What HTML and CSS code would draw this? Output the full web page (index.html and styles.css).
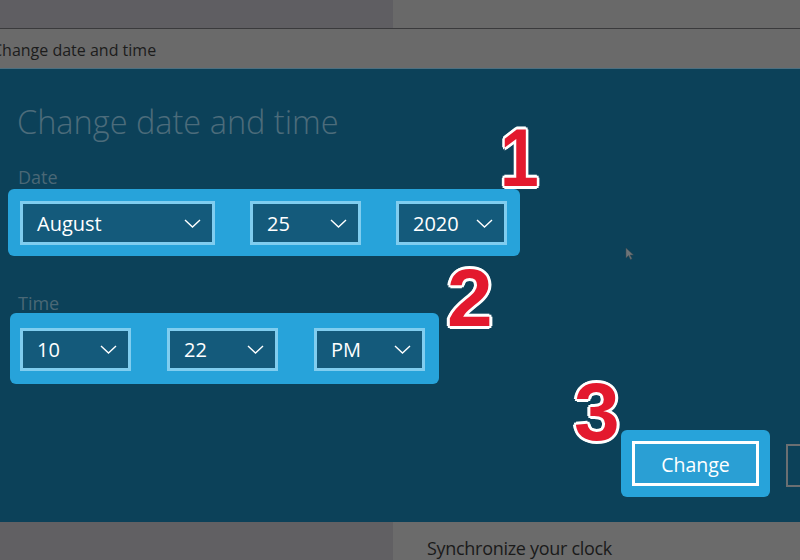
FILE: index.html
```html
<!DOCTYPE html>
<html>
<head>
<meta charset="utf-8">
<link rel="stylesheet" href="styles.css">
</head>
<body>
<div class="screen">
  <div class="topband"><div class="tb-left"></div><div class="tb-right"></div></div>
  <div class="titlebar"><span class="title">Change date and time</span></div>
  <div class="panel">
    <h1 class="heading">Change date and time</h1>
    <div class="label">Date</div>
    <div class="hl hl-date">
      <div class="dd dd-month"><span>August</span><svg class="chev" viewBox="0 0 17 9"><polyline points="1,1 8.5,8 16,1"/></svg></div>
      <div class="dd dd-sm"><span>25</span><svg class="chev" viewBox="0 0 17 9"><polyline points="1,1 8.5,8 16,1"/></svg></div>
      <div class="dd dd-sm"><span>2020</span><svg class="chev" viewBox="0 0 17 9"><polyline points="1,1 8.5,8 16,1"/></svg></div>
    </div>
    <div class="label label-time">Time</div>
    <div class="hl hl-time">
      <div class="dd dd-sm dd-t"><span>10</span><svg class="chev" viewBox="0 0 17 9"><polyline points="1,1 8.5,8 16,1"/></svg></div>
      <div class="dd dd-sm dd-t"><span>22</span><svg class="chev" viewBox="0 0 17 9"><polyline points="1,1 8.5,8 16,1"/></svg></div>
      <div class="dd dd-sm dd-t"><span>PM</span><svg class="chev" viewBox="0 0 17 9"><polyline points="1,1 8.5,8 16,1"/></svg></div>
    </div>
    <div class="actions">
      <div class="hl hl-btn"><div class="btn-change">Change</div></div>
      <div class="btn-cancel"></div>
    </div>
    <div class="num num1">1</div>
    <div class="num num2">2</div>
    <div class="num num3">3</div>
    <svg class="cursor" viewBox="0 0 9 13"><path d="M1 1 L1 11 L3.5 8.5 L5.5 12.5 L7 11.8 L5 8 L8.5 8 Z"/></svg>
  </div>
  <div class="bottomband"><div class="bb-left"></div><div class="bb-right"><span class="sync">Synchronize your clock</span></div></div>
</div>
</body>
</html>
```

FILE: styles.css
```css
* { box-sizing: border-box; }
html, body { margin: 0; padding: 0; }
body { width: 800px; height: 560px; overflow: hidden; font-family: "Open Sans", "Noto Sans", sans-serif; background: #0c4159; }
.screen { width: 800px; height: 560px; display: flex; flex-direction: column; overflow: hidden; }

.topband { height: 29px; display: flex; border-bottom: 1px solid #3a3a3c; flex: none; }
.tb-left { width: 393px; background: #5f5e62; }
.tb-right { flex: 1; background: #696969; }

.titlebar { height: 40px; background: #6a6a6a; flex: none; overflow: hidden; border-bottom: 1px solid #4c6f80; padding-top: 2px; }
.title { display: block; margin-left: -8px; font-size: 16px; line-height: 38px; color: #1c1c1c; white-space: nowrap; }

.panel { position: relative; height: 453px; flex: none; background: #0c4159; padding: 33px 0 0 0; overflow: hidden; }
.heading { margin: 0 0 0 17px; font-size: 32.5px; line-height: 40px; font-weight: 300; color: #4c6c7b; white-space: nowrap; }
.label { margin: 25px 0 2px 18px; font-size: 18px; line-height: 20px; color: #4a6876; }
.label-time { margin-top: 37px; margin-bottom: 0; }

.hl { display: inline-flex; background: #27a3da; border-radius: 6px; }
.hl-date { margin-left: 8px; padding: 12px 13px 11px 12px; gap: 35px; }
.hl-time { margin-left: 10px; padding: 15px 14px 13px 10px; gap: 36px; }

.dd { display: flex; align-items: center; justify-content: space-between; height: 44px; border: 3px solid #80cdef; background: #145a7b; color: #ffffff; font-size: 20px; padding: 0 11px 0 14px; }
.dd-month { width: 195px; }
.dd-sm { width: 111px; }
.dd-t { height: 43px; }
.chev { width: 17px; height: 9px; fill: none; stroke: #ffffff; stroke-width: 1.4; }

.actions { display: flex; align-items: flex-start; gap: 16px; margin: 46px 0 0 621px; }
.hl-btn { padding: 11px 11px 11px 11px; }
.btn-change { width: 127px; height: 45px; border: 3px solid #ffffff; background: #2a9fd4; color: #ffffff; font-size: 19.5px; display: flex; align-items: center; justify-content: center; padding-top: 2px; }
.btn-cancel { flex: none; width: 120px; height: 43px; margin-top: 14px; border: 2px solid #6b6f72; }

.num { position: absolute; font-family: "Liberation Sans", Arial, sans-serif; font-weight: 700; font-size: 82px; line-height: 82px; color: #e3192e;
  text-shadow: 3px 0 0 #fff, -3px 0 0 #fff, 0 3px 0 #fff, 0 -3px 0 #fff, 2px 2px 0 #fff, -2px 2px 0 #fff, 2px -2px 0 #fff, -2px -2px 0 #fff; }
.num1 { left: 500px; top: 48px; transform: scaleX(0.85); transform-origin: left top; }
.num2 { left: 447px; top: 188px; }
.num3 { left: 574px; top: 302px; }

.cursor { position: absolute; left: 625px; top: 178px; width: 9px; height: 13px; fill: #6d7478; stroke: #3e4a50; stroke-width: 0.5; }

.bottomband { flex: 1; display: flex; }
.bb-left { width: 393px; background: #616063; }
.bb-right { flex: 1; background: #6b6b6b; padding: 15px 0 0 34px; }
.sync { font-size: 18px; line-height: 22px; color: #1a1a1a; white-space: nowrap; letter-spacing: -0.3px; }
```
